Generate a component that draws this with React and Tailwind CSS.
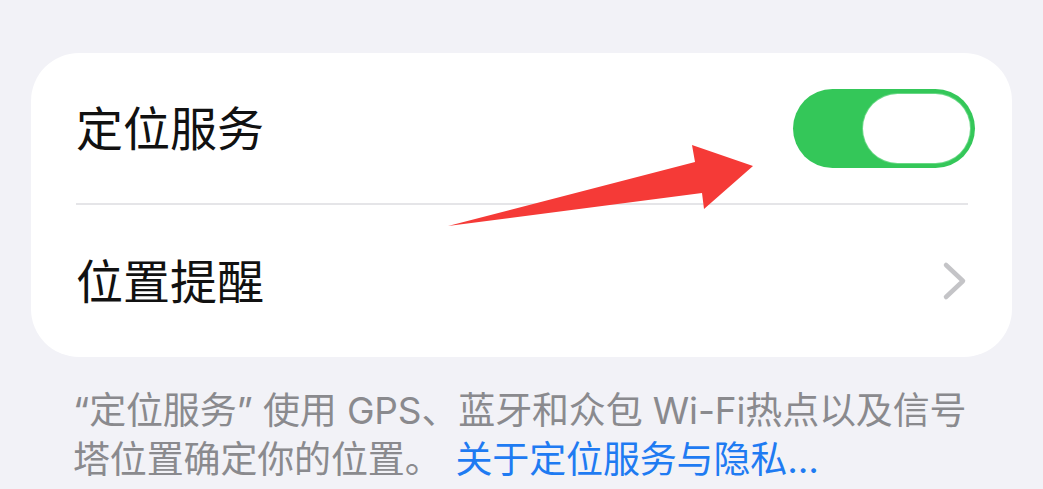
// iOS location services settings screenshot with red annotation arrow
function Toggle() {
    return (
        <div className="w-[182px] h-[79px] rounded-full bg-[#34c759] p-[5px] flex justify-end">
            <div className="w-[107px] h-[69px] rounded-full bg-white ring-1 ring-[#6ad886]"></div>
        </div>
    );
}

function Chevron() {
    return (
        <svg width="26" height="40" viewBox="0 0 26 40" fill="none">
            <path d="M4 4 L21 20 L4 36" stroke="#c4c4c7" strokeWidth="4.5" strokeLinecap="round" strokeLinejoin="round" />
        </svg>
    );
}

export default function App() {
    const font = { fontFamily: '"Inter", "Noto Sans CJK SC", sans-serif' };
    return (
        <div className="relative w-[1043px] h-[489px] overflow-hidden bg-[#f2f2f7] pt-[53px]" style={font}>
            <div className="ml-[31px] w-[981px] rounded-[48px] bg-white">
                <div className="h-[150px] flex items-center justify-between pl-[45px] pr-[37px]">
                    <span className="text-[47px] leading-none text-[#111111]">定位服务</span>
                    <Toggle />
                </div>
                <div className="ml-[45px] mr-[44px] h-[2px] bg-[#e5e5e8]"></div>
                <div className="h-[152px] flex items-center justify-between pl-[45px] pr-[44px]">
                    <span className="text-[47px] leading-none text-[#111111]">位置提醒</span>
                    <Chevron />
                </div>
            </div>

            <p className="mt-[29px] pl-[73px] text-[37px] leading-[49px] tracking-[-0.15px] text-[#8a8a8e] whitespace-nowrap">
                “定位服务” 使用 GPS、蓝牙和众包 Wi-Fi热点以及信号
                <br />
                塔位置确定你的位置。
                <span className="ml-[14px] text-[#1f7bf2]">关于定位服务与隐私...</span>
            </p>

            {/* annotation arrow */}
            <svg className="absolute left-0 top-0" width="1043" height="489" viewBox="0 0 1043 489">
                <polygon points="448,226 695,162 692,145 753,166 704,209 702,193" fill="#f53a37" />
            </svg>
        </div>
    );
}
